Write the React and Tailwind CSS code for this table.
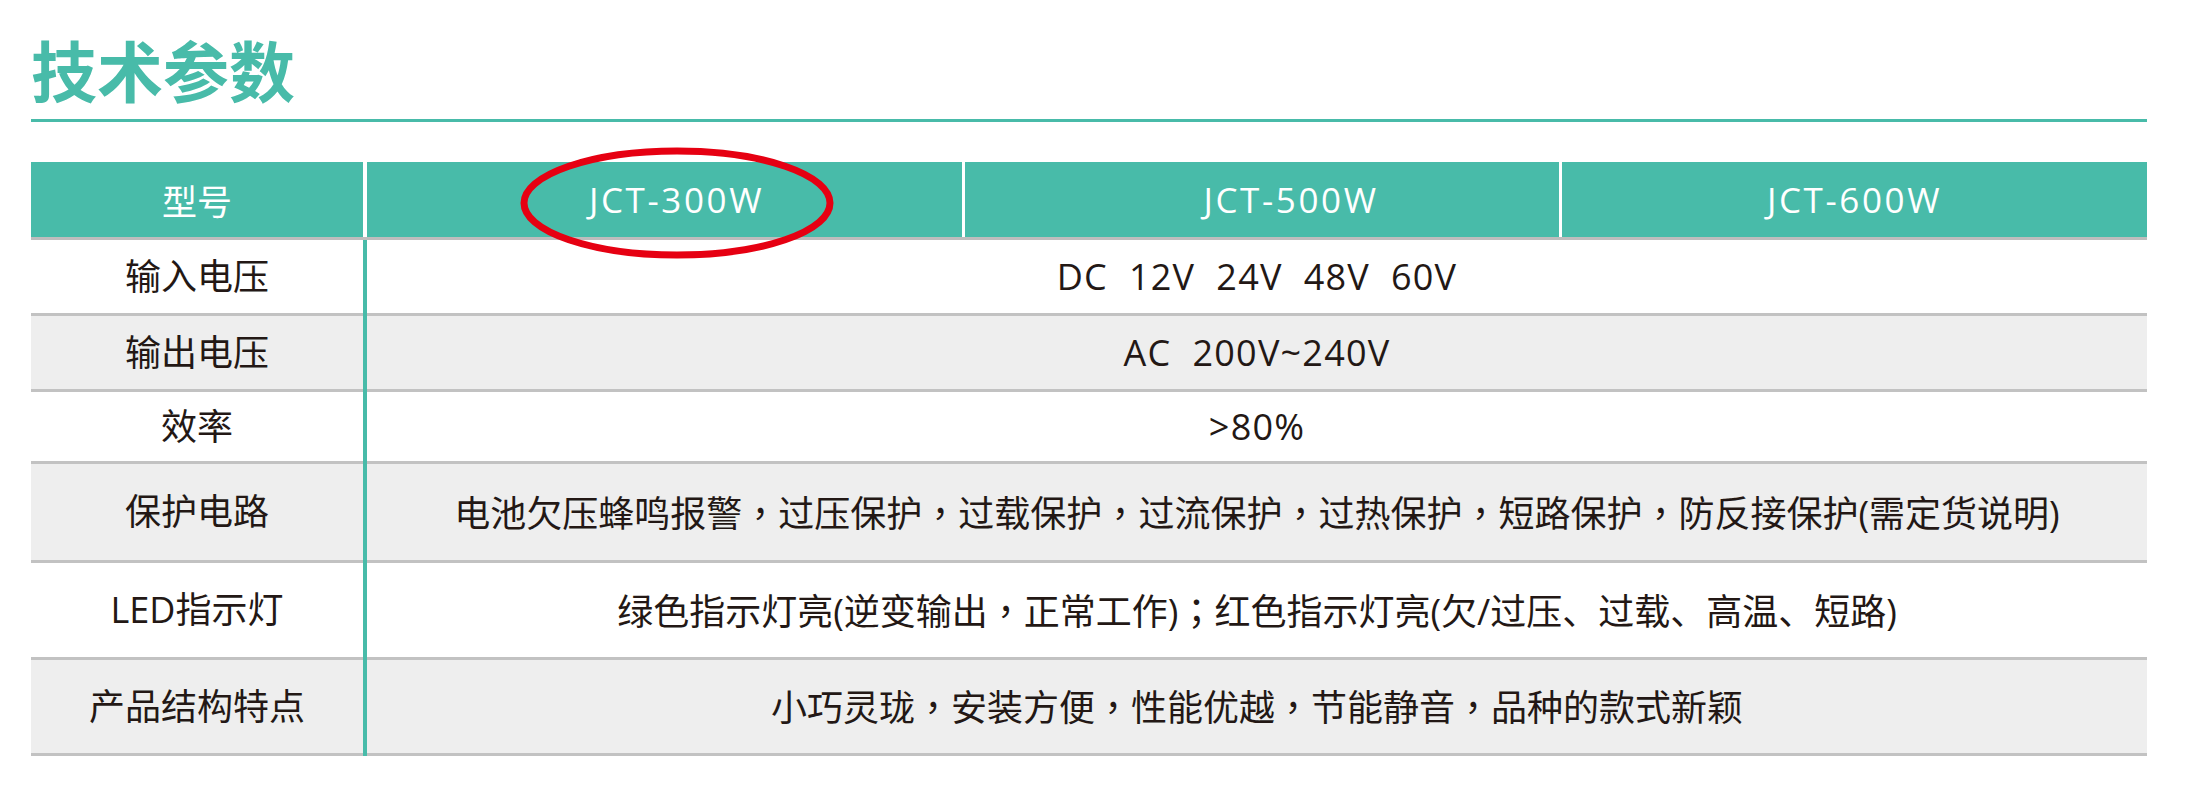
import React from "react";

const FONT = { fontFamily: '"Open Sans", "Noto Sans CJK SC", sans-serif' };

const rows = [
  { label: "输入电压", value: "DC  12V  24V  48V  60V", h: "h-[76px]", bg: "bg-white", latin: true },
  { label: "输出电压", value: "AC  200V~240V", h: "h-[76px]", bg: "bg-[#eeeeee]", latin: true },
  { label: "效率", value: ">80%", h: "h-[72px]", bg: "bg-white", latin: true },
  {
    label: "保护电路",
    value: "电池欠压蜂鸣报警，过压保护，过载保护，过流保护，过热保护，短路保护，防反接保护(需定货说明)",
    h: "h-[99px]",
    bg: "bg-[#eeeeee]",
  },
  {
    label: "LED指示灯",
    value: "绿色指示灯亮(逆变输出，正常工作)；红色指示灯亮(欠/过压、过载、高温、短路)",
    h: "h-[97px]",
    bg: "bg-white",
  },
  {
    label: "产品结构特点",
    value: "小巧灵珑，安装方便，性能优越，节能静音，品种的款式新颖",
    h: "h-[96px]",
    bg: "bg-[#eeeeee]",
  },
];

function renderValue(str) {
  return str.split(/([，；])/).map((part, i) =>
    part === "，" || part === "；" ? (
      <span key={i} className="font-['Noto_Sans_CJK_TC',sans-serif]">
        {part}
      </span>
    ) : (
      <React.Fragment key={i}>{part}</React.Fragment>
    )
  );
}

export default function App() {
  return (
    <div className="relative w-[2190px] h-[808px] bg-white overflow-hidden" style={FONT}>
      <div className="pl-[31px] pr-[43px]">
        <div className="pt-[35px] h-[101px]">
          <h1 className="text-[66px] leading-none font-bold text-[#48bba9] whitespace-pre font-['Noto_Sans_CJK_SC',sans-serif]">
            技术参数
          </h1>
        </div>
        <div className="mt-[18px] h-[3px] bg-[#48bba9]" />

        <div className="mt-[40px]">
          {/* header */}
          <div className="flex h-[78px] border-b-[3px] border-[#bdbdbd] bg-[#48bba9] text-white text-[35px] leading-none">
            <div className="w-[332px] flex items-center justify-center font-['Noto_Sans_CJK_SC',sans-serif]">
              型号
            </div>
            <div className="w-[4px] bg-white" />
            <div className="w-[595px] flex items-center justify-center pl-[24px] tracking-[2.6px]">JCT-300W</div>
            <div className="w-[3px] bg-white" />
            <div className="w-[594px] flex items-center justify-center pl-[58px] tracking-[2.6px]">JCT-500W</div>
            <div className="w-[3px] bg-white" />
            <div className="flex-1 flex items-center justify-center tracking-[2.6px]">JCT-600W</div>
          </div>

          {/* body */}
          {rows.map((r) => (
            <div key={r.label} className={`flex ${r.h} text-[36px] leading-none text-[#231815]`}>
              <div className={`w-[332px] flex items-center justify-center border-b-[3px] border-[#c2c2c2] ${r.bg}`}>
                {r.label}
              </div>
              <div className="w-[4px] bg-[#48bba9]" />
              <div
                className={`flex-1 flex items-center justify-center whitespace-pre border-b-[3px] border-[#c2c2c2] ${r.bg} ${
                  r.latin ? "tracking-[1.2px]" : ""
                }`}
              >
                <span>{renderValue(r.value)}</span>
              </div>
            </div>
          ))}
        </div>
      </div>

      {/* red ellipse annotation */}
      <svg className="absolute left-[519px] top-[146px]" width="316" height="114" viewBox="0 0 316 114">
        <ellipse cx="158" cy="57" rx="153" ry="52" fill="none" stroke="#e60012" strokeWidth="7" />
      </svg>
    </div>
  );
}
